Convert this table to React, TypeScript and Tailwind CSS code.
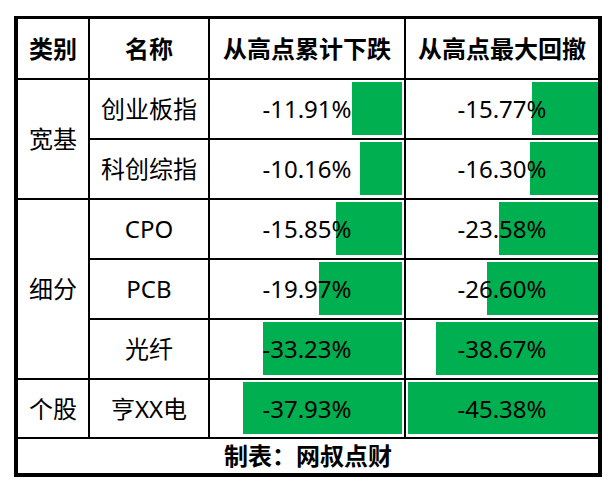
import React from "react";

type Row = { name: string; drop: number; drawdown: number };

const groups: { label: string; rows: Row[] }[] = [
  {
    label: "宽基",
    rows: [
      { name: "创业板指", drop: 11.91, drawdown: 15.77 },
      { name: "科创综指", drop: 10.16, drawdown: 16.3 },
    ],
  },
  {
    label: "细分",
    rows: [
      { name: "CPO", drop: 15.85, drawdown: 23.58 },
      { name: "PCB", drop: 19.97, drawdown: 26.6 },
      { name: "光纤", drop: 33.23, drawdown: 38.67 },
    ],
  },
  {
    label: "个股",
    rows: [{ name: "亨XX电", drop: 37.93, drawdown: 45.38 }],
  },
];

// px per percent point of the data bars
const SCALE = 4.18;

function BarCell({ value, inset }: { value: number; inset: string }) {
  return (
    <div className="relative bg-white flex items-center justify-center">
      <div
        className={`absolute top-[2px] bottom-[3px] bg-[#00b050] ${inset}`}
        style={{ width: `${value * SCALE}px` }}
      />
      <span className="relative">-{value.toFixed(2)}%</span>
    </div>
  );
}

export default function App() {
  return (
    <div className="w-[614px] h-[488px] bg-white pt-[16px] pl-[14px] text-black text-[24px] leading-none font-['Noto_Sans','Noto_Sans_CJK_SC',sans-serif]">
      <div className="w-[588px] border-l-4 border-r-4 border-t-[3px] border-b-4 border-black bg-black">
        <div className="grid grid-cols-[70px_118px_194px_192px] grid-rows-[59px_58px_58px_58px_58px_58px_57px_34px] gap-[2px]">
          <div className="bg-white flex items-center justify-center font-bold">类别</div>
          <div className="bg-white flex items-center justify-center font-bold">名称</div>
          <div className="bg-white flex items-center justify-center font-bold">从高点累计下跌</div>
          <div className="bg-white flex items-center justify-center font-bold">从高点最大回撤</div>

          {groups.map((g) => (
            <React.Fragment key={g.label}>
              <div
                className={`bg-white flex items-center justify-center ${
                  g.rows.length === 2 ? "row-span-2" : g.rows.length === 3 ? "row-span-3" : ""
                }`}
              >
                {g.label}
              </div>
              {g.rows.map((r, i) => (
                <React.Fragment key={r.name}>
                  {i > 0 && null}
                  <div className="bg-white flex items-center justify-center">{r.name}</div>
                  <BarCell value={r.drop} inset="right-[2px]" />
                  <BarCell value={r.drawdown} inset="right-0" />
                </React.Fragment>
              ))}
            </React.Fragment>
          ))}

          <div className="col-span-4 bg-white flex items-center justify-center font-bold">
            制表：网叔点财
          </div>
        </div>
      </div>
    </div>
  );
}
